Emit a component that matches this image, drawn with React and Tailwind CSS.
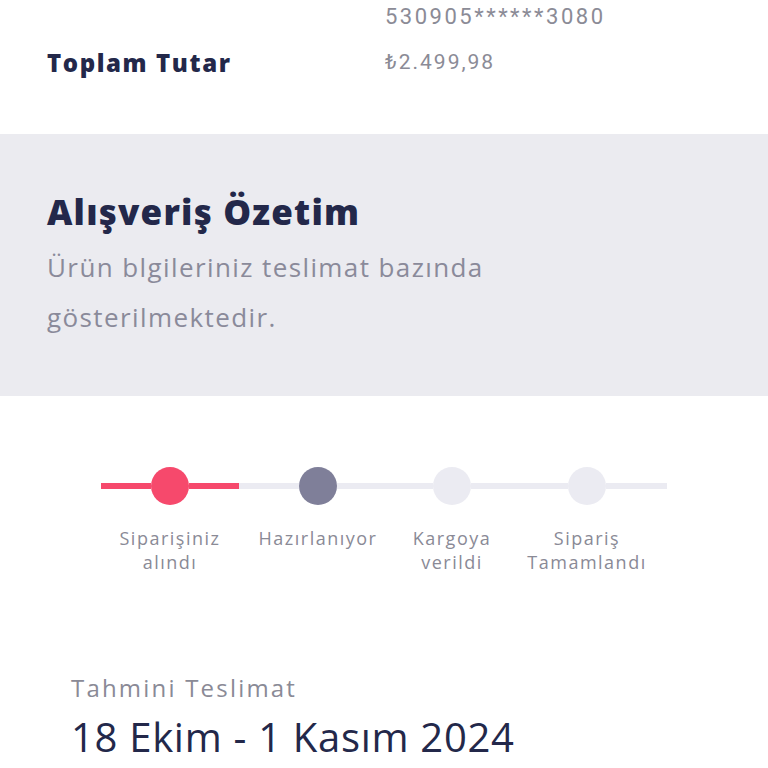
import React from 'react';

export default function App() {
  const steps = [
    { lines: ['Siparişiniz', 'alındı'], w: 'w-[138px]', dot: 'bg-[#f6496c]', left: 'bg-[#f6496c]', right: 'bg-[#f6496c]' },
    { lines: ['Hazırlanıyor'], w: 'w-[158px]', dot: 'bg-[#7f7f99]', left: 'bg-[#ebebf2]', right: 'bg-[#ebebf2]' },
    { lines: ['Kargoya', 'verildi'], w: 'w-[110px]', dot: 'bg-[#ebebf2]', left: 'bg-[#ebebf2]', right: 'bg-[#ebebf2]' },
    { lines: ['Sipariş', 'Tamamlandı'], w: 'w-[160px]', dot: 'bg-[#ebebf2]', left: 'bg-[#ebebf2]', right: 'bg-[#ebebf2]' },
  ];

  return (
    <div className="w-[768px] h-[768px] overflow-hidden bg-white font-['Open_Sans',sans-serif]">
      {/* Payment info */}
      <div className="h-[134px] pl-[47px]">
        <div className="flex h-[32px] items-center">
          <div className="w-[338px]" />
          <span className="font-['Roboto',sans-serif] text-[22px] text-[#8b8b96] tracking-[2.5px]">530905******3080</span>
        </div>
        <div className="flex h-[62px] items-center">
          <span className="w-[338px] font-extrabold text-[24px] text-[#23284a] tracking-[1.6px]">Toplam Tutar</span>
          <span className="font-['Roboto',sans-serif] text-[21px] text-[#8b8b96] tracking-[2px]">₺2.499,98</span>
        </div>
      </div>

      {/* Summary header */}
      <div className="h-[262px] bg-[#ebebf0] pl-[47px] pt-[51px]">
        <h2 className="font-extrabold text-[35px] leading-[54px] text-[#23284a] tracking-[1.2px]">Alışveriş Özetim</h2>
        <p className="mt-[3px] text-[26px] leading-[50px] text-[#8a8a9a] tracking-[1.4px] w-[540px]">
          Ürün blgileriniz teslimat bazında gösterilmektedir.
        </p>
      </div>

      {/* Stepper */}
      <div className="pl-[101px] pt-[71px] flex">
        {steps.map((s, i) => (
          <div key={i} className={`${s.w} flex flex-col items-center`}>
            <div className="w-full flex items-center h-[38px]">
              <div className={`flex-1 h-[6px] ${s.left}`} />
              <div className={`w-[38px] h-[38px] rounded-full ${s.dot}`} />
              <div className={`flex-1 h-[6px] ${s.right}`} />
            </div>
            <div className="mt-[21px] text-center text-[18px] leading-[24px] tracking-[1.5px] text-[#8a8a96] whitespace-nowrap">
              {s.lines.map((l, j) => (
                <div key={j}>{l}</div>
              ))}
            </div>
          </div>
        ))}
      </div>

      {/* Delivery */}
      <div className="pl-[71px] pt-[99px]">
        <div className="text-[24px] leading-[30px] text-[#8a8a96] tracking-[2.2px]">Tahmini Teslimat</div>
        <div className="mt-[9px] text-[40px] leading-[50px] font-medium text-[#23284a] tracking-[0.7px]">18 Ekim - 1 Kasım 2024</div>
      </div>
    </div>
  );
}
